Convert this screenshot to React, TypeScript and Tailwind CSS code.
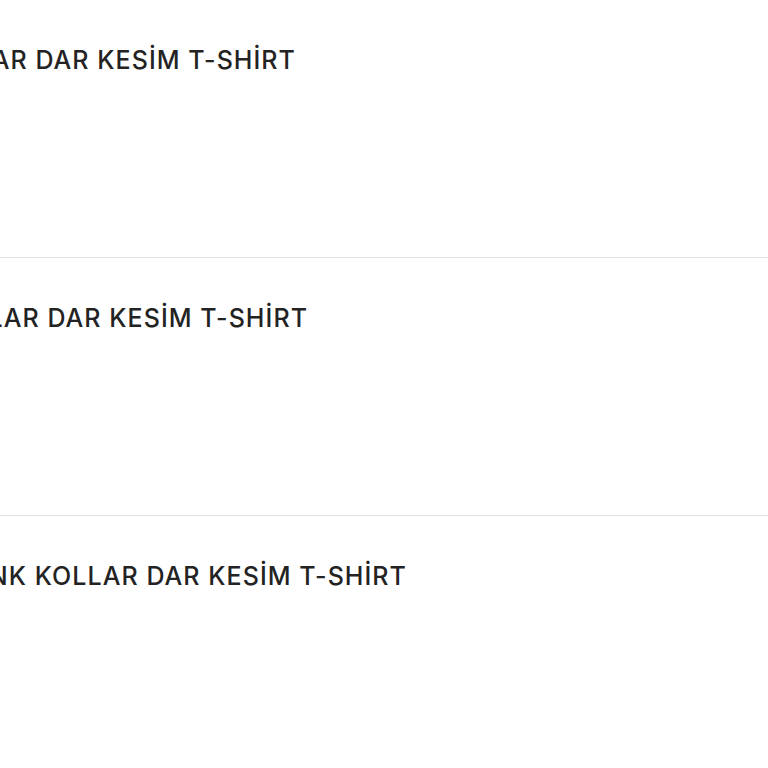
export default function App() {
  const rows = [
    { text: "ERKEK BEYAZ BİSİKLET YAKA KISA KOLLAR DAR KESİM T-SHİRT", w: "w-[296px]" },
    { text: "ERKEK SİYAH BİSİKLET YAKA KISA KOLLAR DAR KESİM T-SHİRT", w: "w-[308px]" },
    { text: "ERKEK LACİVERT BİSİKLET YAKA İKİ RENK KOLLAR DAR KESİM T-SHİRT", w: "w-[407px]" },
  ];
  return (
    <div className="w-[768px] h-[768px] bg-white overflow-hidden" style={{ fontFamily: "Inter, 'Noto Sans', sans-serif" }}>
      {rows.map((r, i) => (
        <div key={i} className={`h-[258px] pt-[46px] ${i < 2 ? "border-b border-[#e2e2e2]" : ""}`}>
          <div className={`${r.w} flex justify-end`}>
            <span className="shrink-0 whitespace-nowrap text-[25px] font-medium text-[#232323] tracking-[1.05px] leading-[28px]">
              {r.text}
            </span>
          </div>
        </div>
      ))}
    </div>
  );
}
